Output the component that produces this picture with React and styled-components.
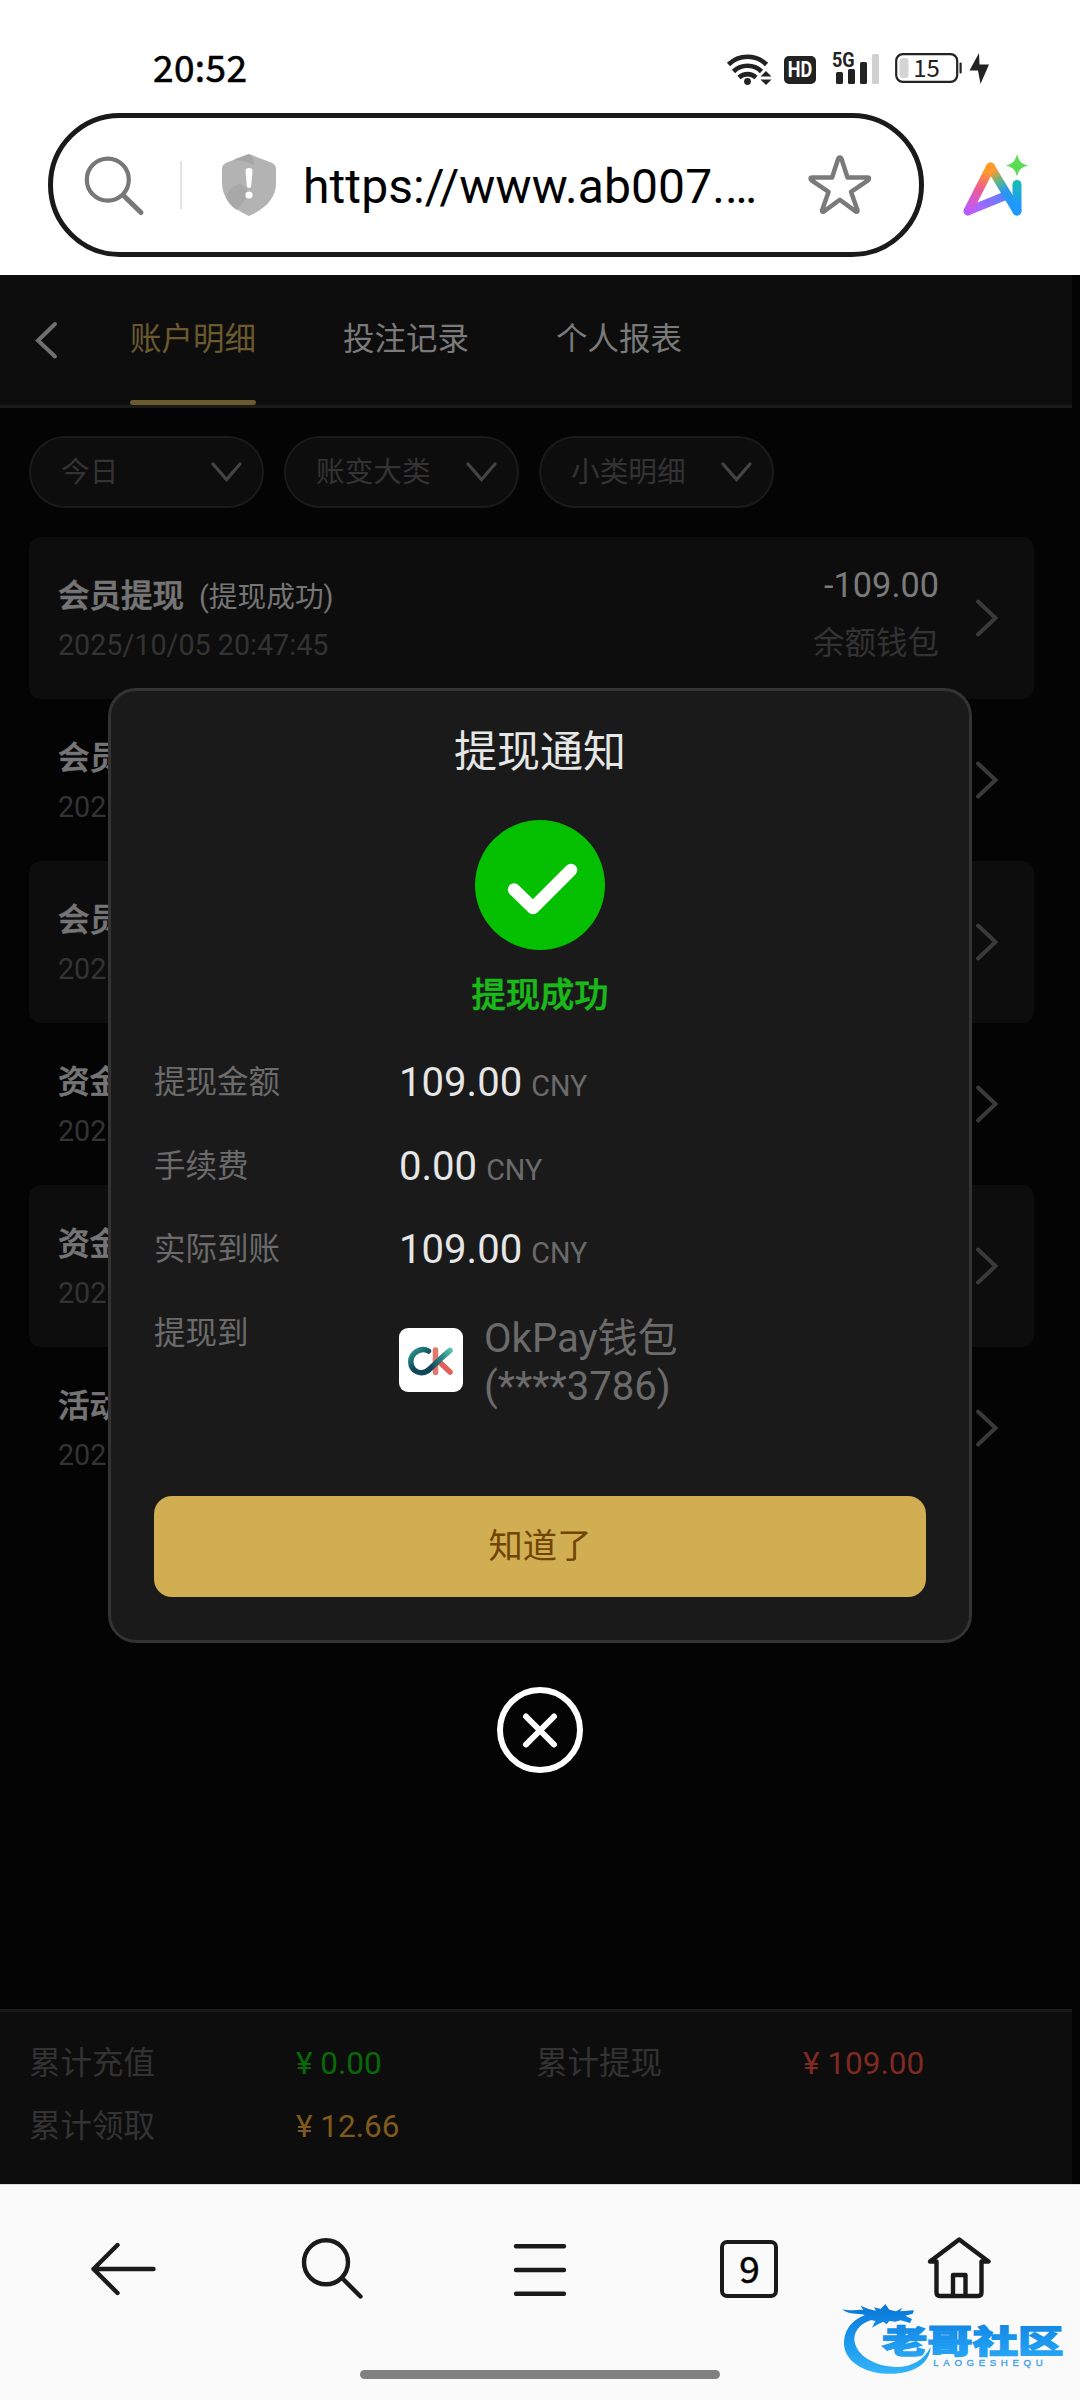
import styled, { createGlobalStyle } from 'styled-components';

const records = [
  { id: 1, title: '会员提现', status: '(提现成功)', date: '2025/10/05 20:47:45', amount: '-109.00', wallet: '余额钱包' },
  { id: 2, title: '会员', date: '202' },
  { id: 3, title: '会员', date: '202' },
  { id: 4, title: '资金', date: '202' },
  { id: 5, title: '资金', date: '202' },
  { id: 6, title: '活动', date: '202' },
];

const amounts = [
  { label: '提现金额', value: '109.00' },
  { label: '手续费', value: '0.00' },
  { label: '实际到账', value: '109.00' },
];

const totals = [
  { label: '累计充值', value: '¥ 0.00', color: '#096909' },
  { label: '累计提现', value: '¥ 109.00', color: '#7f2a22' },
  { label: '累计领取', value: '¥ 12.66', color: '#7f5a1c' },
];

const filters = ['今日', '账变大类', '小类明细'];

function StatusIcons() {
  return (
    <StatusGroup>
      <svg width="46" height="36" viewBox="727 50 46 36" fill="none" stroke="#222" strokeWidth="4.6">
        <path d="M728.5 64.5a27 27 0 0 1 38 0" />
        <path d="M733.5 71.5a20 20 0 0 1 28 0" />
        <path d="M739 77.5a12.5 12.5 0 0 1 17 0" />
        <circle cx="747.5" cy="81.5" r="3.4" fill="#222" stroke="none" />
        <path d="M766 71l5.5 5.5h-11zM766 85l5.5-5.5h-11z" fill="#222" stroke="none" />
      </svg>
      <HdBadge><span>HD</span></HdBadge>
      <Signal>
        <span>5G</span>
        <svg width="43" height="30" viewBox="836 54 43 30">
          <rect x="836" y="72" width="7" height="12" rx="1.5" fill="#222" />
          <rect x="848" y="69" width="7" height="15" rx="1.5" fill="#222" />
          <rect x="860" y="62" width="7" height="22" rx="1.5" fill="#222" />
          <rect x="872" y="54" width="7" height="30" rx="1.5" fill="#d0d0d0" />
        </svg>
      </Signal>
      <svg width="67" height="36" viewBox="895 50 67 36">
        <rect x="896.2" y="54.2" width="61" height="27.6" rx="6.5" fill="none" stroke="#222" strokeWidth="2.2" />
        <rect x="899.5" y="58" width="9" height="20" rx="3" fill="#d4d4d4" />
        <rect x="959.5" y="62.5" width="2.2" height="11" rx="1" fill="#222" />
        <text x="926.5" y="77" textAnchor="middle" fontSize="24" fontFamily="'Noto Sans CJK SC'" fill="#222">15</text>
      </svg>
      <svg width="20" height="36" viewBox="969 50 20 36">
        <path d="M979 53l-9.500 17.500h8.500l2.500 13.500 8.500-19.500h-9.500z" fill="#222" />
      </svg>
    </StatusGroup>
  )
}

function AiIcon() {
  return (
    <svg width="72" height="70" viewBox="960 150 72 70" fill="none" strokeWidth="9" strokeLinecap="round" strokeLinejoin="round">
      <defs>
        <linearGradient id="aiLeft" gradientUnits="userSpaceOnUse" x1="989" y1="167" x2="967" y2="211">
          <stop offset="0.1" stopColor="#ff9a2a" />
          <stop offset="0.5" stopColor="#ee5a92" />
          <stop offset="1" stopColor="#b95cff" />
        </linearGradient>
        <linearGradient id="aiBar" gradientUnits="userSpaceOnUse" x1="967" y1="211" x2="1004" y2="196">
          <stop offset="0" stopColor="#c45cff" />
          <stop offset="1" stopColor="#5c80ff" />
        </linearGradient>
        <linearGradient id="aiRight" gradientUnits="userSpaceOnUse" x1="989" y1="167" x2="1016" y2="211">
          <stop offset="0.08" stopColor="#ff9a2a" />
          <stop offset="0.33" stopColor="#5fb58a" />
          <stop offset="0.55" stopColor="#2b96f0" />
          <stop offset="1" stopColor="#2098ff" />
        </linearGradient>
        <linearGradient id="aiStem" gradientUnits="userSpaceOnUse" x1="1016" y1="182" x2="1016" y2="211">
          <stop offset="0" stopColor="#17bcb4" />
          <stop offset="0.8" stopColor="#2098ff" />
        </linearGradient>
      </defs>
      <path d="M967 211L1004 196" stroke="url(#aiBar)" strokeWidth="8.500" />
      <path d="M989.5 167L1016 211" stroke="url(#aiRight)" />
      <path d="M967 211L989.500 167" stroke="url(#aiLeft)" />
      <path d="M1016 184.500V211" stroke="url(#aiStem)" />
      <path d="M1016 154c2 7.500 4 9.500 11 11.500-7 2-9 4-11 11-2-7-4-9-11-11 7-2 9-4 11-11.500z" fill="#5bdc55" />
    </svg>
  )
}

function Chevron({ direction }) {
  if (direction === 'down') {
    return (
      <svg width="31" height="20" fill="none" stroke="#444" strokeWidth="3.2" strokeLinecap="round">
        <path d="M2 2l13.500 15.500L29 2" />
      </svg>
    )
  }

  return (
    <svg width="23" height="38" fill="none" stroke="#3a3a3a" strokeWidth="4" strokeLinecap="round">
      <path d="M2 2.500L19.500 19 2 35.500" />
    </svg>
  )
}

function WalletLogo() {
  return (
    <LogoBox>
      <svg width="64" height="64" viewBox="0 0 64 64" fill="none" strokeWidth="5.500" strokeLinecap="round">
        <defs>
          <linearGradient id="okC" x1="0" y1="0" x2="0.7" y2="1">
            <stop offset="0" stopColor="#2f9c93" />
            <stop offset="0.3" stopColor="#1f7478" />
            <stop offset="0.65" stopColor="#12465a" />
            <stop offset="1" stopColor="#12465a" />
          </linearGradient>
          <linearGradient id="okArm" gradientUnits="userSpaceOnUse" x1="32" y1="40" x2="52" y2="22">
            <stop offset="0" stopColor="#12465a" />
            <stop offset="0.6" stopColor="#2a8c8a" />
            <stop offset="1" stopColor="#5ac0a8" />
          </linearGradient>
        </defs>
        <path d="M36.500 22V44.500" stroke="#e5766c" />
        <path d="M41 34.500L51 44" stroke="#e0605a" />
        <path d="M29.500 23C22 18.500 11.800 25 11.800 33.500C11.800 43.500 22 47.500 29 42.500" stroke="url(#okC)" />
        <path d="M29 42.500C34 38.500 38 33 51 22.500" stroke="url(#okArm)" />
      </svg>
    </LogoBox>
  )
}

function Watermark() {
  return (
    <WatermarkSvg width="240" height="80" viewBox="720 350 720 240">
      <defs>
        <linearGradient id="wmBlue" gradientUnits="userSpaceOnUse" x1="0" y1="380" x2="0" y2="580">
          <stop offset="0" stopColor="#0a78d8" />
          <stop offset="0.5" stopColor="#1b96ee" />
          <stop offset="1" stopColor="#33b4f8" />
        </linearGradient>
      </defs>
      <path fill="url(#wmBlue)" d="M812 400C752 412 725 458 734 505C748 556 812 584 885 580C948 575 988 548 992 500C972 540 932 562 885 560C815 556 768 522 763 480C762 445 790 424 830 414Z" />
      <path fill="url(#wmBlue)" d="M727 387C748 393 768 388 790 388L781 376L806 386L828 391L822 381L842 386L856 371L868 388L888 393L908 382L900 393L942 390L938 400L916 406L936 416L930 428L902 420L886 424L868 422L860 432L850 424L834 432L816 442L826 422L800 416L778 420L794 404C770 398 745 404 727 387Z" />
      <text x="846" y="519" textLength="544" lengthAdjust="spacingAndGlyphs" fontSize="94" fontWeight="900" fontFamily="'Noto Sans CJK SC'" fill="url(#wmBlue)" stroke="url(#wmBlue)" strokeWidth="4">老哥社区</text>
      <text x="1000" y="557" textLength="328" fontSize="29" fontFamily="'Liberation Sans'" fill="#3aa0ea" stroke="#3aa0ea" strokeWidth="1">LAOGESHEQU</text>
    </WatermarkSvg>
  )
}

export default function App() {
  return (
    <Screen>
      <GlobalStyle />
      <StatusBar>
        <Clock>20:52</Clock>
        <StatusIcons />
      </StatusBar>
      <AddressRow>
        <AddressPill>
          <svg width="60" height="60" viewBox="84 154 60 60" fill="none" stroke="#777" strokeWidth="4.2" strokeLinecap="round">
            <circle cx="107.800" cy="178.700" r="21" />
            <path d="M123.500 194.500L141 211.500" strokeWidth="5" />
          </svg>
          <Divider />
          <svg width="54" height="62" viewBox="222 154 54 62">
            <path d="M249 154l22 8.500q5 1.500 5 7v14c0 14-10 25-27 32.500-17-7.500-27-18.500-27-32.500v-14q0-5.500 5-7z" fill="#b3b3b3" />
            <path d="M234 159.500l15-5.500q5 3 5 11-9-4-20-5.500z" fill="#a6a6a6" />
            <path d="M226 198q3-12 13-14 9 1 9 12l-11 14q-7-4-11-12z" fill="#a8a8a8" />
            <path d="M245.500 171q0-3 3.500-3t3.500 3l-1.300 15q-.3 2-2.200 2t-2.200-2z" fill="#fff" />
            <circle cx="249" cy="195" r="3.600" fill="#fff" />
          </svg>
          <Url>https://www.ab007.…</Url>
          <svg width="64" height="62" viewBox="808 151 64 62" fill="none" stroke="#7a7a7a" strokeWidth="4.500" strokeLinejoin="round">
            <path d="M839.800 154.500q1.200 0 1.700 1.500l6 18.500h20q1.500 0 1.500 1t-1 1.800l-17 11.500 6.500 18.500q.3 2-1.500 1.300l-16.200-11.800-16.200 11.800q-1.800.7-1.500-1.300l6.500-18.500-17-11.500q-1-.8-1-1.800t1.500-1h20l6-18.500q.5-1.500 1.700-1.500z" />
          </svg>
        </AddressPill>
        <AiIcon />
      </AddressRow>

      <Page>
        <TopBar>
          <svg width="23" height="38" fill="none" stroke="#707070" strokeWidth="4" strokeLinecap="round">
            <path d="M20 3L3 19.500 20 35.500" />
          </svg>
          <Tab $active>账户明细</Tab>
          <Tab>投注记录</Tab>
          <Tab>个人报表</Tab>
        </TopBar>

        <Filters>
          {filters.map((name) => (
            <Filter key={name}>
              {name}
              <Chevron direction="down" />
            </Filter>
          ))}
        </Filters>

        <List>
          {records.map((record, index) => (
            <Record key={record.id} $striped={index % 2 === 0}>
              <RecordInfo>
                <h3>{record.title}{record.status && <span>{record.status}</span>}</h3>
                <p>{record.date}</p>
              </RecordInfo>
              <RecordAmount>
                <strong>{record.amount}</strong>
                <p>{record.wallet}</p>
              </RecordAmount>
              <Chevron direction="right" />
            </Record>
          ))}
        </List>

        <Totals>
          {totals.map((total) => (
            <Total key={total.label} $color={total.color}>
              <span>{total.label}</span>
              <strong>{total.value}</strong>
            </Total>
          ))}
        </Totals>

        <Overlay>
          <Modal>
            <h2>提现通知</h2>
            <SuccessIcon width="130" height="130" viewBox="475 820 130 130">
              <circle cx="540" cy="885" r="65" fill="#05c000" />
              <path d="M514 889.500L533 908L571 870" fill="none" stroke="#fff" strokeWidth="12.500" strokeLinecap="round" strokeLinejoin="round" />
            </SuccessIcon>
            <SuccessText>提现成功</SuccessText>
            <Details>
              {amounts.map((item) => (
                <Detail key={item.label}>
                  <Label>{item.label}</Label>
                  <Value>{item.value}<small>CNY</small></Value>
                </Detail>
              ))}
              <Detail>
                <Label>提现到</Label>
                <Account>
                  <WalletLogo />
                  <p>OkPay钱包<br />(****3786)</p>
                </Account>
              </Detail>
            </Details>
            <ConfirmButton>知道了</ConfirmButton>
          </Modal>
          <CloseButton>
            <svg width="86" height="86" fill="none" stroke="#fff" strokeWidth="6" strokeLinecap="round">
              <circle cx="43" cy="43" r="40" />
              <path d="M29 29.500L57 57.500M57 29.500L29 57.500" />
            </svg>
          </CloseButton>
        </Overlay>
      </Page>

      <BottomBar>
        <NavIcon>
          <svg width="68" height="64" viewBox="89.500 2237 68 64">
            <path d="M118 2245L94 2269L118 2293M94 2269H154" />
          </svg>
        </NavIcon>
        <NavIcon>
          <svg width="64" height="64" viewBox="300 2237 64 64">
            <circle cx="326" cy="2262.300" r="22" />
            <path d="M343 2279L360.500 2296.500" />
          </svg>
        </NavIcon>
        <NavIcon>
          <svg width="56" height="64" viewBox="512 2237 56 64">
            <path d="M516 2246.300H564M516 2270H564M516 2293.700H564" />
          </svg>
        </NavIcon>
        <NavIcon>
          <TabCount>9</TabCount>
        </NavIcon>
        <NavIcon>
          <svg width="68" height="64" viewBox="923.500 2237 68 64">
            <path d="M937 2261.500H930.500L959.700 2239.500L989 2261.500H982V2292.500Q982 2296 978.500 2296H940.500Q937 2296 937 2292.500ZM953.500 2295V2275H966V2295" />
          </svg>
        </NavIcon>
        <HomeIndicator />
        <Watermark />
      </BottomBar>
    </Screen>
  )
}

const GlobalStyle = createGlobalStyle`

  * {
    box-sizing: border-box;
    margin: 0;
    padding: 0;
  }

  body {
    background: #fff;
    font-family: Roboto, 'Noto Sans CJK SC', sans-serif;
  }

  svg {
    display: block;
    flex-shrink: 0;
    overflow: visible;
  }
`;

const Screen = styled.div`

  width: 1080px;
  height: 2400px;
  display: flex;
  flex-direction: column;
  overflow: hidden;
`;

const StatusBar = styled.div`

  height: 113px;
  padding: 0 91px 0 153px;
  display: flex;
  justify-content: space-between;
  align-items: flex-start;
`;

const Clock = styled.p`

  margin-top: 42px;
  font-family: 'Noto Sans CJK SC', sans-serif;
  font-size: 37px;
  line-height: 48px;
  letter-spacing: 0.4px;
  -webkit-text-stroke: 0.6px #000;
`;

const StatusGroup = styled.div`

  margin-top: 50px;
  display: flex;

  > svg:last-child {
    margin-left: 7px;
  }
`;

const HdBadge = styled.div`

  width: 32px;
  height: 28px;
  margin: 6px 17px 0 11px;
  border-radius: 5px;
  background: #222;
  display: flex;
  justify-content: center;

  span {
    color: #fff;
    font-size: 22px;
    font-weight: 700;
    line-height: 28px;
    transform: scaleX(0.82);
  }
`;

const Signal = styled.div`

  position: relative;
  width: 47px;
  height: 36px;
  margin-right: 15px;
  padding: 4px 0 0 3px;

  span {
    position: absolute;
    left: -1px;
    top: -2px;
    color: #222;
    font-size: 21px;
    font-weight: 700;
    line-height: 24px;
    transform: scaleX(0.86);
    transform-origin: left;
  }
`;

const AddressRow = styled.div`

  height: 162px;
  padding-left: 48px;
  display: flex;
  align-items: flex-start;
  gap: 37px;

  > svg {
    margin-top: 37px;
  }
`;

const AddressPill = styled.div`

  width: 876px;
  height: 144px;
  padding: 0 47px 0 31px;
  border: 5px solid #1a1a1a;
  border-radius: 72px;
  display: flex;
  align-items: center;
`;

const Divider = styled.div`

  width: 2px;
  height: 48px;
  margin: 0 40px 0 36px;
  background: #e3e3e3;
`;

const Url = styled.p`

  flex: 1;
  padding: 3px 0 0 27px;
  font-size: 48px;
  line-height: 64px;
  letter-spacing: 0.1px;
  white-space: nowrap;
`;

const Page = styled.div`

  position: relative;
  height: 1909px;
  padding-right: 8px;
  background: #040404;
  display: flex;
  flex-direction: column;
`;

const TopBar = styled.div`

  height: 133px;
  padding-left: 35px;
  background: #0d0d0d;
  border-bottom: 3px solid #1a1a1a;
  display: flex;
  align-items: center;

  > svg {
    margin-right: 72px;
  }
`;

const Tab = styled.p`

  height: 130px;
  margin-right: 87px;
  color: ${(props) => (props.$active) ? '#6b5a2e' : '#7a7a7a'};
  font-size: 31.5px;
  line-height: 130px;

  &::after {
    content: '';
    display: block;
    height: 5px;
    margin-top: -5px;
    border-radius: 3px;
    background: ${(props) => (props.$active) ? '#6b5a2e' : 'transparent'};
  }
`;

const Filters = styled.div`

  padding: 28px 29px 29px;
  display: flex;
  gap: 20px;
`;

const Filter = styled.div`

  width: 235px;
  height: 72px;
  padding: 0 20px 0 30px;
  border: 2px solid #1a1a1a;
  border-radius: 36px;
  background: #0d0d0d;
  color: #333;
  font-size: 28.7px;
  line-height: 70px;
  display: flex;
  justify-content: space-between;
  align-items: center;
`;

const List = styled.div`

  flex: 1;
  padding: 0 38px 0 29px;
`;

const Record = styled.div`

  height: 162px;
  padding: 0 35px 0 29px;
  border-radius: 12px;
  background: ${(props) => (props.$striped) ? '#0d0d0d' : 'transparent'};
  display: flex;

  > svg {
    margin: 62px 0 0 37px;
  }
`;

const RecordInfo = styled.div`

  flex: 1;
  padding-top: 38px;

  h3 {
    color: #757575;
    font-size: 31.5px;
    font-weight: 500;
    line-height: 44px;
    -webkit-text-stroke: 0.7px #757575;
  }

  span {
    margin-left: 15px;
    font-size: 28.7px;
    font-weight: 400;
    -webkit-text-stroke: 0;
  }

  p {
    margin-top: 4px;
    color: #333;
    font-size: 28.7px;
    line-height: 44px;
  }
`;

const RecordAmount = styled.div`

  padding-top: 28px;
  text-align: right;

  strong {
    display: block;
    height: 40px;
    color: #7a7a7a;
    font-size: 34.3px;
    font-weight: 400;
    line-height: 40px;
  }

  p {
    margin-top: 19px;
    color: #333;
    font-size: 31.5px;
    line-height: 40px;
  }
`;

const Totals = styled.div`

  height: 175px;
  padding: 20px 29px 0;
  background: #0d0d0d;
  border-top: 3px solid #1a1a1a;
  display: grid;
  grid-template-columns: 1fr 1fr;
  grid-auto-rows: 63px;
`;

const Total = styled.div`

  display: flex;
  font-size: 31.5px;
  line-height: 63px;

  span {
    width: 267px;
    color: #333;
  }

  strong {
    color: ${(props) => props.$color};
    font-weight: 400;
  }
`;

const Overlay = styled.div`

  position: absolute;
  inset: 0;
  padding-top: 413px;
  display: flex;
  flex-direction: column;
  align-items: center;
`;

const Modal = styled.div`

  width: 864px;
  height: 955px;
  padding: 31px 43px 0;
  border: 3px solid #333;
  border-radius: 28px;
  background: #1a1a1a;
  display: flex;
  flex-direction: column;
  align-items: center;

  h2 {
    color: #e6e6e6;
    font-size: 43px;
    font-weight: 400;
    line-height: 60px;
  }
`;

const SuccessIcon = styled.svg`

  margin-top: 38px;
`;

const SuccessText = styled.p`

  margin-top: 20px;
  color: #1ab91a;
  font-size: 34.3px;
  font-weight: 500;
  line-height: 50px;
  -webkit-text-stroke: 0.6px #1ab91a;
`;

const Details = styled.div`

  width: 100%;
  height: 455px;
  margin-top: 21px;
`;

const Detail = styled.div`

  height: 83.5px;
  display: flex;
  align-items: flex-start;
  line-height: 83.5px;
`;

const Label = styled.p`

  width: 245px;
  color: #6b6b6b;
  font-size: 31.5px;
`;

const Value = styled.p`

  color: #e6e6e6;
  font-size: 40.1px;

  small {
    margin-left: 9px;
    color: #6b6b6b;
    font-size: 28.7px;
    line-height: 1;
  }
`;

const Account = styled.div`

  margin-top: 23px;
  display: flex;
  align-items: center;
  gap: 21px;
  color: #6b6b6b;
  font-size: 40.1px;
  line-height: 48px;
`;

const LogoBox = styled.div`

  width: 64px;
  height: 64px;
  margin-bottom: 6px;
  border-radius: 9px;
  background: #fff;
`;

const ConfirmButton = styled.button`

  width: 772px;
  height: 101px;
  padding-bottom: 2px;
  border: none;
  border-radius: 18px;
  background: #d1ae52;
  color: #704503;
  font-family: inherit;
  font-size: 34.3px;
  line-height: 98px;
`;

const CloseButton = styled.button`

  width: 86px;
  height: 86px;
  margin-top: 44px;
  border: none;
  background: none;
`;

const BottomBar = styled.div`

  position: relative;
  height: 216px;
  padding: 0 19px;
  border-top: 1px solid #ddd;
  background: #fafafa;
  display: flex;
`;

const NavIcon = styled.div`

  flex: 1;
  height: 64px;
  margin-top: 52px;
  display: flex;
  justify-content: center;
  align-items: center;

  path, circle {
    fill: none;
    stroke: #1a1a1a;
    stroke-width: 4.4px;
    stroke-linecap: round;
    stroke-linejoin: round;
  }
`;

const TabCount = styled.p`

  width: 58px;
  height: 58px;
  margin-left: 2px;
  border: 4px solid #1a1a1a;
  border-radius: 7px;
  font-family: 'Noto Sans CJK SC', sans-serif;
  font-size: 37px;
  line-height: 46px;
  text-align: center;
  -webkit-text-stroke: 0.6px #1a1a1a;
`;

const HomeIndicator = styled.div`

  position: absolute;
  left: 360px;
  top: 185px;
  width: 360px;
  height: 9px;
  border-radius: 5px;
  background: #808080;
`;

const WatermarkSvg = styled.svg`

  position: absolute;
  left: 840px;
  top: 112px;
`;
